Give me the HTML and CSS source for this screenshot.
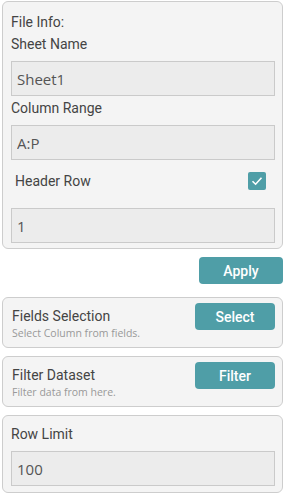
FILE: index.html
```html
<!DOCTYPE html>
<html lang="en">
<head>
<meta charset="UTF-8">
<meta name="viewport" content="width=device-width, initial-scale=1.0">
<title>File Settings</title>
<link rel="stylesheet" href="styles.css">
</head>
<body>
<div class="sidebar">
  <div class="panel file-info">
    <div class="label">File Info:</div>
    <div class="label">Sheet Name</div>
    <input class="field" type="text" value="Sheet1">
    <div class="label">Column Range</div>
    <input class="field" type="text" value="A:P">
    <div class="check-row">
      <span>Header Row</span>
      <span class="checkbox">
        <svg width="12" height="10" viewBox="0 0 12 10"><path d="M1.5 5.2 L4.6 8.2 L10.5 1.8" fill="none" stroke="#fff" stroke-width="1.6"/></svg>
      </span>
    </div>
    <input class="field header-field" type="text" value="1">
  </div>

  <div class="apply-row">
    <button class="btn apply">Apply</button>
  </div>

  <div class="panel action">
    <div class="action-text">
      <div class="title">Fields Selection</div>
      <div class="hint">Select Column from fields.</div>
    </div>
    <button class="btn">Select</button>
  </div>

  <div class="panel action">
    <div class="action-text">
      <div class="title">Filter Dataset</div>
      <div class="hint">Filter data from here.</div>
    </div>
    <button class="btn">Filter</button>
  </div>

  <div class="panel row-limit">
    <div class="label">Row Limit</div>
    <input class="field" type="text" value="100">
  </div>
</div>
</body>
</html>
```

FILE: styles.css
```css
body {
  margin: 0;
  background: #fff;
  font-family: Roboto, 'Liberation Sans', sans-serif;
  color: #444;
}
.sidebar {
  width: 281px;
  padding: 1px 0 0 2px;
}
.panel {
  background: #f4f4f4;
  border: 1px solid #cdcdcd;
  border-radius: 6px;
}
.file-info {
  padding: 9px 7px 4px 8px;
}
.label {
  font-size: 14px;
  line-height: 22px;
  color: #444;
}
.field {
  display: block;
  box-sizing: border-box;
  width: 264px;
  height: 35px;
  margin: 6px 0 1px;
  padding: 0 5px;
  background: #ececec;
  border: 1px solid #cacaca;
  font-family: 'Open Sans', sans-serif;
  font-size: 15px;
  color: #555;
  outline: none;
}
.check-row {
  display: flex;
  align-items: center;
  justify-content: space-between;
  height: 26px;
  margin-top: 8px;
  padding: 0 9px 0 4px;
  font-size: 14px;
}
.checkbox {
  display: flex;
  align-items: center;
  justify-content: center;
  width: 18px;
  height: 18px;
  border-radius: 2px;
  background: #4f9ea7;
}
.header-field {
  margin-top: 14px;
}
.apply-row {
  display: flex;
  justify-content: flex-end;
  margin: 8px 0 13px;
}
.btn {
  width: 80px;
  height: 27px;
  border: none;
  border-radius: 4px;
  background: #4f9ea7;
  color: #fff;
  font-family: Roboto, sans-serif;
  font-size: 14px;
  font-weight: 500;
  cursor: pointer;
}
.apply {
  width: 84px;
}
.action {
  display: flex;
  justify-content: space-between;
  align-items: flex-start;
  padding: 5px 7px 7px 9px;
  margin-bottom: 8px;
}
.title {
  font-size: 14px;
  line-height: 22px;
  margin-top: 2px;
}
.hint {
  font-family: 'Open Sans', sans-serif;
  font-size: 10.5px;
  line-height: 13px;
  color: #999;
}
.row-limit {
  padding: 7px 7px 5px 8px;
}
```
